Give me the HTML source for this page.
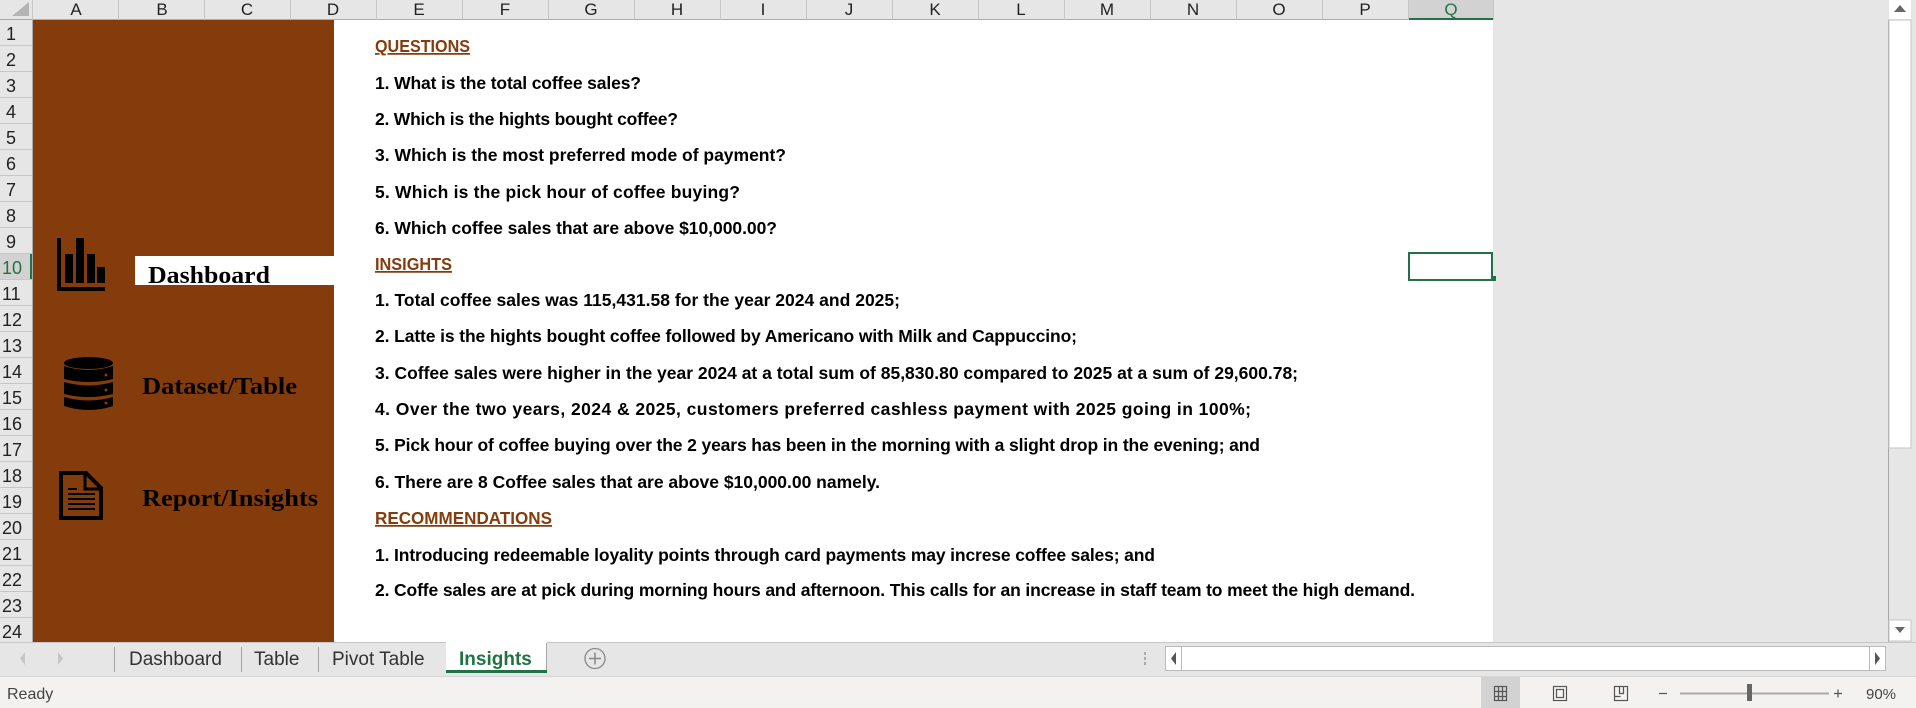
<!DOCTYPE html>
<html><head><meta charset="utf-8">
<style>
*{margin:0;padding:0;box-sizing:border-box}
body{width:1916px;height:708px;overflow:hidden;background:#e6e6e6;font-family:"Liberation Sans",sans-serif;position:relative}
.abs{position:absolute}
</style></head><body>
<svg class="abs" style="left:0;top:0" width="1916" height="708" xmlns="http://www.w3.org/2000/svg" font-family="Liberation Sans, sans-serif">
<rect x="0" y="0" width="1916" height="708" fill="#e6e6e6"/>
<rect x="32" y="20" width="1461" height="622" fill="#fff"/>
<rect x="0" y="0" width="1493" height="20" fill="#e6e6e6"/>
<line x1="0" y1="19.5" x2="1493" y2="19.5" stroke="#ababab"/>
<polygon points="12,16 29,16 29,2" fill="#b4b4b4"/>
<g stroke="#c6c6c6">
<line x1="32.5" y1="0" x2="32.5" y2="20"/>
<line x1="118.5" y1="0" x2="118.5" y2="20"/><line x1="204.5" y1="0" x2="204.5" y2="20"/>
<line x1="290.5" y1="0" x2="290.5" y2="20"/><line x1="376.5" y1="0" x2="376.5" y2="20"/>
<line x1="462.5" y1="0" x2="462.5" y2="20"/><line x1="548.5" y1="0" x2="548.5" y2="20"/>
<line x1="634.5" y1="0" x2="634.5" y2="20"/><line x1="720.5" y1="0" x2="720.5" y2="20"/>
<line x1="806.5" y1="0" x2="806.5" y2="20"/><line x1="892.5" y1="0" x2="892.5" y2="20"/>
<line x1="978.5" y1="0" x2="978.5" y2="20"/><line x1="1064.5" y1="0" x2="1064.5" y2="20"/>
<line x1="1150.5" y1="0" x2="1150.5" y2="20"/><line x1="1236.5" y1="0" x2="1236.5" y2="20"/>
<line x1="1322.5" y1="0" x2="1322.5" y2="20"/><line x1="1408.5" y1="0" x2="1408.5" y2="20"/>
<line x1="1493.5" y1="0" x2="1493.5" y2="20"/>
</g>
<rect x="1409" y="0" width="84" height="19" fill="#d2d2d2"/>
<rect x="1409" y="18" width="84" height="2" fill="#217346"/>
<g font-size="17" fill="#222" text-anchor="middle">
<text x="76" y="15">A</text><text x="162" y="15">B</text><text x="247" y="15">C</text><text x="333" y="15">D</text>
<text x="419" y="15">E</text><text x="505" y="15">F</text><text x="591" y="15">G</text><text x="677" y="15">H</text>
<text x="763" y="15">I</text><text x="849" y="15">J</text><text x="935" y="15">K</text><text x="1021" y="15">L</text>
<text x="1107" y="15">M</text><text x="1193" y="15">N</text><text x="1279" y="15">O</text><text x="1365" y="15">P</text>
<text x="1451" y="15" fill="#217346">Q</text>
</g>
<rect x="0" y="20" width="32" height="622" fill="#e6e6e6"/>
<line x1="32.5" y1="20" x2="32.5" y2="642" stroke="#ababab"/>
<rect x="0" y="253" width="32" height="26" fill="#d2d2d2"/>
<rect x="30" y="253" width="2" height="26" fill="#217346"/>
<g stroke="#c6c6c6">
<line x1="0" y1="45.5" x2="32" y2="45.5"/><line x1="0" y1="71.5" x2="32" y2="71.5"/><line x1="0" y1="97.5" x2="32" y2="97.5"/>
<line x1="0" y1="123.5" x2="32" y2="123.5"/><line x1="0" y1="149.5" x2="32" y2="149.5"/><line x1="0" y1="175.5" x2="32" y2="175.5"/>
<line x1="0" y1="201.5" x2="32" y2="201.5"/><line x1="0" y1="227.5" x2="32" y2="227.5"/><line x1="0" y1="253.5" x2="32" y2="253.5"/>
<line x1="0" y1="279.5" x2="32" y2="279.5"/><line x1="0" y1="305.5" x2="32" y2="305.5"/><line x1="0" y1="331.5" x2="32" y2="331.5"/>
<line x1="0" y1="357.5" x2="32" y2="357.5"/><line x1="0" y1="383.5" x2="32" y2="383.5"/><line x1="0" y1="409.5" x2="32" y2="409.5"/>
<line x1="0" y1="435.5" x2="32" y2="435.5"/><line x1="0" y1="461.5" x2="32" y2="461.5"/><line x1="0" y1="487.5" x2="32" y2="487.5"/>
<line x1="0" y1="513.5" x2="32" y2="513.5"/><line x1="0" y1="539.5" x2="32" y2="539.5"/><line x1="0" y1="565.5" x2="32" y2="565.5"/>
<line x1="0" y1="591.5" x2="32" y2="591.5"/><line x1="0" y1="617.5" x2="32" y2="617.5"/>
</g>
<g font-size="18" fill="#222">
<text x="6" y="40">1</text><text x="6" y="66">2</text><text x="6" y="92">3</text><text x="6" y="118">4</text>
<text x="6" y="144">5</text><text x="6" y="170">6</text><text x="6" y="196">7</text><text x="6" y="222">8</text>
<text x="6" y="248">9</text><text x="2" y="274" fill="#217346">10</text><text x="2" y="300">11</text><text x="2" y="326">12</text>
<text x="2" y="352">13</text><text x="2" y="378">14</text><text x="2" y="404">15</text><text x="2" y="430">16</text>
<text x="2" y="456">17</text><text x="2" y="482">18</text><text x="2" y="508">19</text><text x="2" y="534">20</text>
<text x="2" y="560">21</text><text x="2" y="586">22</text><text x="2" y="612">23</text><text x="2" y="638">24</text>
</g>
<rect x="33" y="20" width="301" height="622" fill="#843c0c"/>
<rect x="135" y="256" width="199" height="29" fill="#fff"/>
<g font-family="Liberation Serif, serif" font-weight="bold" font-size="24" fill="#000">
<text x="148" y="283" textLength="122" lengthAdjust="spacingAndGlyphs">Dashboard</text>
<text x="142" y="394" textLength="155" lengthAdjust="spacingAndGlyphs">Dataset/Table</text>
<text x="142" y="506" textLength="176" lengthAdjust="spacingAndGlyphs">Report/Insights</text>
</g>
<g fill="#000">
<rect x="57" y="238" width="4" height="53"/><rect x="57" y="287" width="48" height="4"/>
<rect x="65" y="254" width="8" height="29"/><rect x="76" y="238" width="8" height="45"/>
<rect x="87" y="254" width="8" height="29"/><rect x="97" y="267" width="8" height="16"/>
</g>
<g fill="#000">
<ellipse cx="88.5" cy="363" rx="24.5" ry="6"/>
<path d="M64 366 Q88.5 374 113 366 L113 379 Q88.5 385 64 379Z"/>
<path d="M64 382 Q88.5 389 113 382 L113 394 Q88.5 400 64 394Z"/>
<path d="M64 397 Q88.5 404 113 397 L113 406 Q88.5 414 64 406Z"/>
</g>
<g fill="#843c0c"><circle cx="106" cy="375" r="1.5"/><circle cx="106" cy="390" r="1.5"/><circle cx="106" cy="403" r="1.5"/></g>
<path d="M61 473 L86 473 L101 488 L101 518 L61 518Z" fill="none" stroke="#000" stroke-width="4"/>
<path d="M85 473 L85 489 L101 489" fill="none" stroke="#000" stroke-width="3"/>
<g fill="#000"><rect x="68" y="488" width="9" height="2"/><rect x="68" y="493" width="27" height="2"/>
<rect x="68" y="498" width="27" height="2"/><rect x="68" y="503" width="27" height="2"/><rect x="68" y="508" width="27" height="2"/></g>
<rect x="1409" y="253" width="83" height="27" fill="none" stroke="#217346" stroke-width="2"/>
<rect x="1491" y="276" width="5" height="5" fill="#217346"/>
<g font-weight="bold" font-size="17.5" fill="#000">
<text x="375" y="52" fill="#843c0c" text-decoration="underline" textLength="95" lengthAdjust="spacingAndGlyphs">QUESTIONS</text>
<text x="375" y="89" textLength="266" lengthAdjust="spacing">1. What is the total coffee sales?</text>
<text x="375" y="125" textLength="303" lengthAdjust="spacing">2. Which is the hights bought coffee?</text>
<text x="375" y="161" textLength="411" lengthAdjust="spacing">3. Which is the most preferred mode of payment?</text>
<text x="375" y="198" textLength="365" lengthAdjust="spacing">5. Which is the pick hour of coffee buying?</text>
<text x="375" y="234" textLength="402" lengthAdjust="spacing">6. Which coffee sales that are above $10,000.00?</text>
<text x="375" y="270" fill="#843c0c" text-decoration="underline" textLength="77" lengthAdjust="spacingAndGlyphs">INSIGHTS</text>
<text x="375" y="306" textLength="525" lengthAdjust="spacing">1. Total coffee sales was 115,431.58 for the year 2024 and 2025;</text>
<text x="375" y="342" textLength="702" lengthAdjust="spacing">2. Latte is the hights bought coffee followed by Americano with Milk and Cappuccino;</text>
<text x="375" y="379" textLength="923" lengthAdjust="spacing">3. Coffee sales were higher in the year 2024 at a total sum of 85,830.80 compared to 2025 at a sum of 29,600.78;</text>
<text x="375" y="415" textLength="876" lengthAdjust="spacing">4. Over the two years, 2024 &amp; 2025, customers preferred cashless payment with 2025 going in 100%;</text>
<text x="375" y="451" textLength="885" lengthAdjust="spacing">5. Pick hour of coffee buying over the 2 years has been in the morning with a slight drop in the evening; and</text>
<text x="375" y="488" textLength="505" lengthAdjust="spacing">6. There are 8 Coffee sales that are above $10,000.00 namely.</text>
<text x="375" y="524" fill="#843c0c" text-decoration="underline" textLength="177" lengthAdjust="spacingAndGlyphs">RECOMMENDATIONS</text>
<text x="375" y="561" textLength="780" lengthAdjust="spacing">1. Introducing redeemable loyality points through card payments may increse coffee sales; and</text>
<text x="375" y="596" textLength="1040" lengthAdjust="spacing">2. Coffe sales are at pick during morning hours and afternoon. This calls for an increase in staff team to meet the high demand.</text>
</g>
<rect x="1889" y="0" width="27" height="642" fill="#e6e6e6"/>
<line x1="1888.5" y1="20" x2="1888.5" y2="642" stroke="#a6a6a6"/>
<rect x="1889" y="0" width="22" height="19" fill="#fff"/>
<polygon points="1894,12 1906,12 1900,5" fill="#666"/>
<rect x="1889" y="20" width="22" height="428" fill="#fff" stroke="#c6c6c6"/>
<rect x="1889" y="620" width="22" height="21" fill="#fff" stroke="#c6c6c6"/>
<polygon points="1895,627 1905,627 1900,633" fill="#666"/>
<rect x="0" y="642" width="1916" height="34" fill="#e6e6e6"/>
<line x1="0" y1="642.5" x2="1916" y2="642.5" stroke="#c6c6c6"/>
<polygon points="25,652 25,665 20,658.5" fill="#c6c6c6"/>
<polygon points="58,652 58,665 63,658.5" fill="#c6c6c6"/>
<g stroke="#a6a6a6"><line x1="114.5" y1="647" x2="114.5" y2="672"/><line x1="241.5" y1="647" x2="241.5" y2="672"/><line x1="318.5" y1="647" x2="318.5" y2="672"/></g>
<rect x="446" y="642" width="101" height="31" fill="#fff"/>
<line x1="546.5" y1="643" x2="546.5" y2="672" stroke="#a6a6a6"/>
<rect x="446" y="670" width="101" height="3" fill="#217346"/>
<g font-size="19" fill="#333">
<text x="129" y="665">Dashboard</text><text x="254" y="665">Table</text><text x="332" y="665">Pivot Table</text>
</g>
<text x="459" y="665" font-size="19" font-weight="bold" fill="#217346">Insights</text>
<circle cx="595" cy="658.5" r="10" fill="none" stroke="#888" stroke-width="1.3"/>
<path d="M589 658.5H601M595 652.5V664.5" stroke="#888" stroke-width="1.5"/>
<g fill="#aaa"><rect x="1144" y="652" width="2" height="3"/><rect x="1144" y="657" width="2" height="3"/><rect x="1144" y="662" width="2" height="3"/></g>
<rect x="1165.5" y="646.5" width="720" height="24" fill="#fff" stroke="#bbb"/>
<line x1="1181.5" y1="647" x2="1181.5" y2="670" stroke="#bbb"/>
<line x1="1869.5" y1="647" x2="1869.5" y2="670" stroke="#bbb"/>
<polygon points="1176,652 1176,665 1171,658.5" fill="#555"/>
<polygon points="1875,652 1875,665 1880,658.5" fill="#555"/>
<rect x="0" y="676" width="1916" height="32" fill="#f3f2f1"/>
<line x1="0" y1="676.5" x2="1916" y2="676.5" stroke="#d6d6d6"/>
<text x="7" y="699" font-size="16" fill="#444">Ready</text>
<rect x="1481" y="677" width="39" height="31" fill="#d2d2d2"/>
<g fill="none" stroke="#555" stroke-width="1.2">
<rect x="1494.5" y="686.5" width="12" height="14"/><path d="M1498.5 686.5V700.5M1502.5 686.5V700.5M1494.5 691.5H1506.5M1494.5 696.5H1506.5"/>
<rect x="1553.5" y="686.5" width="13" height="14"/><rect x="1556.5" y="689.5" width="7" height="8"/>
<rect x="1614.5" y="686.5" width="13" height="14"/><path d="M1619.5 686.5V693.5H1623.5V686.5M1614.5 696.5H1620.5"/>
</g>
<path d="M1659 693.5H1667" stroke="#555" stroke-width="1.2"/>
<path d="M1680 693.5H1829" stroke="#aaa" stroke-width="2"/>
<rect x="1747" y="684" width="5" height="17" fill="#666"/>
<path d="M1834 693.5H1842M1838 689.5V697.5" stroke="#555" stroke-width="1.2"/>
<text x="1866" y="699" font-size="15" fill="#444">90%</text>
</svg>
</body></html>
